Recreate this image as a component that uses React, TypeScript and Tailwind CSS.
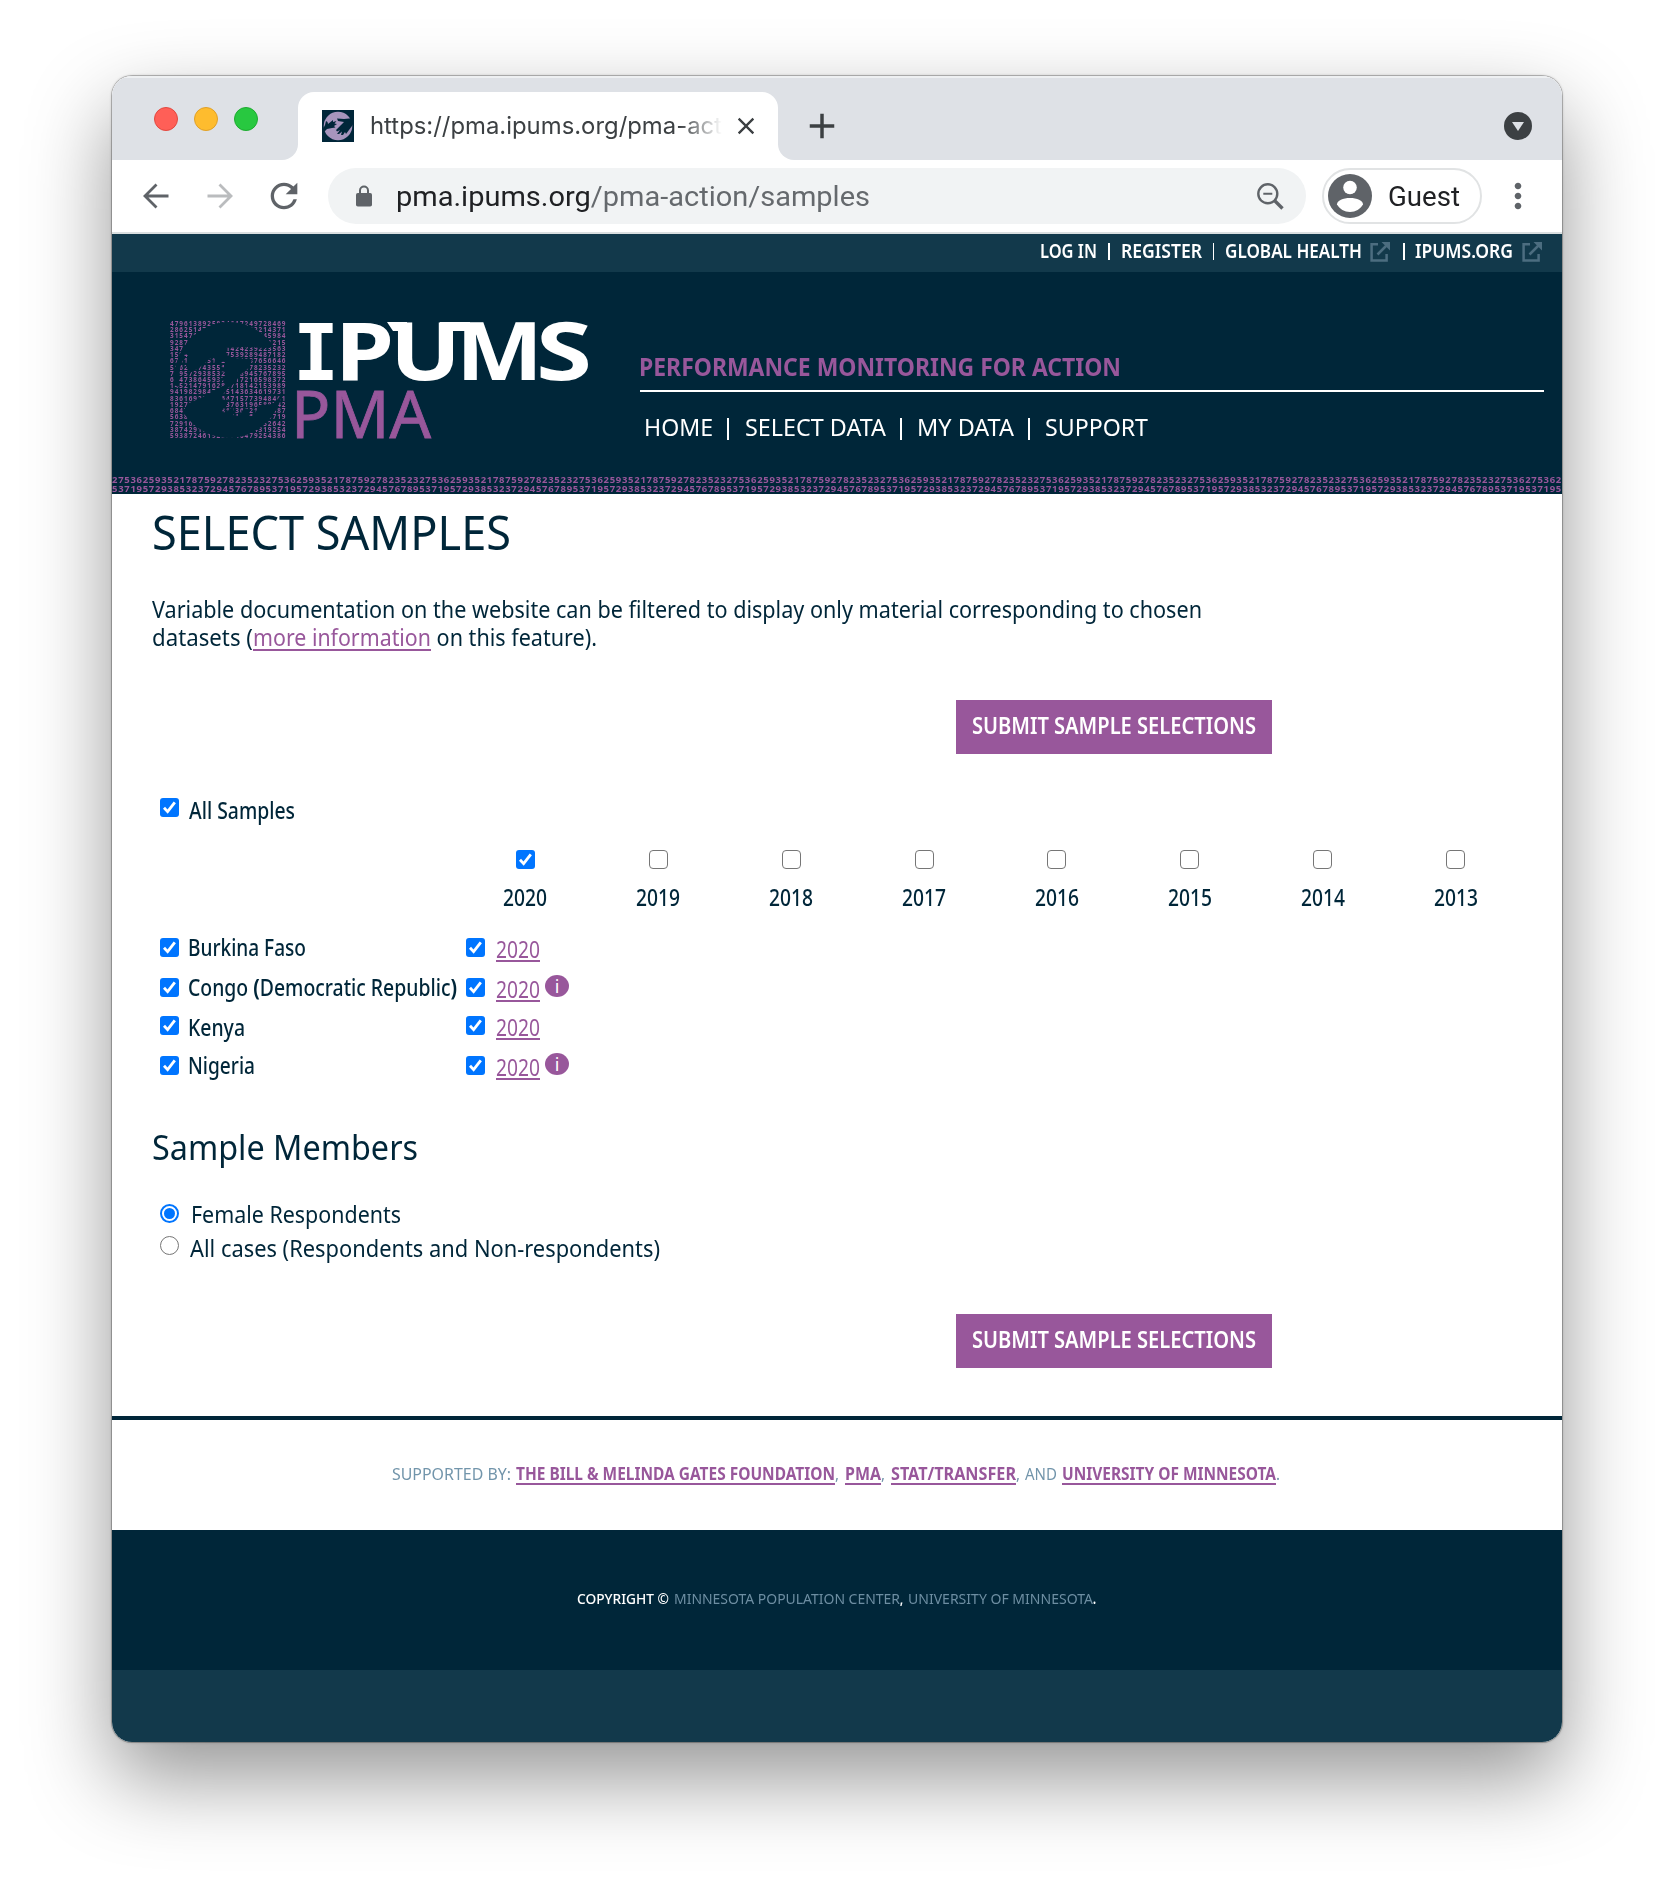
import { useLayoutEffect, useRef, useState } from "react";
import type { ReactNode } from "react";
import { MdAdd, MdClose, MdMoreVert, MdRefresh } from "react-icons/md";

/** One line of text condensed or expanded horizontally to fill a given width. */
function Fit({ w, className = "", children }: { w: number; className?: string; children: ReactNode }) {
  const ref = useRef<HTMLSpanElement>(null);
  const scaleRef = useRef(1);
  const [scale, setScale] = useState(1);
  scaleRef.current = scale;
  useLayoutEffect(() => {
    if (ref.current && ref.current.offsetWidth) {
      setScale((w / ref.current.getBoundingClientRect().width) * scaleRef.current);
    }
  }, [w]);
  return (
    <span className={`block shrink-0 whitespace-pre ${className}`} style={{ width: w }}>
      <span ref={ref} className="inline-block origin-left" style={{ transform: `scaleX(${scale})` }}>
        {children}
      </span>
    </span>
  );
}

function Check({ on = true, className = "" }: { on?: boolean; className?: string }) {
  return on ? (
    <span className={`block size-[19px] shrink-0 rounded-[3px] bg-[#0075ff] ${className}`}>
      <svg viewBox="0 0 19 19" className="size-full" fill="none" stroke="#fff" strokeWidth="2.8">
        <path d="M4 9.8 7.6 13.6 14.8 4.4" />
      </svg>
    </span>
  ) : (
    <span className={`block size-[19px] shrink-0 rounded-[4px] border-[1.5px] border-[#767676] bg-white ${className}`} />
  );
}

function External({ className = "" }: { className?: string }) {
  return (
    <svg viewBox="0 0 20 20" className={`size-5 shrink-0 ${className}`} fill="none" stroke="#4c6d80" strokeWidth="2.5">
      <path d="M8 2.2H1.6v16.2h15V12" />
      <path d="M7.5 12.5 17 3" />
      <path d="M11.5 0H20v8.5z" fill="#4c6d80" stroke="none" />
    </svg>
  );
}

const emblemRows = [
  "4796138925834617249728469",
  "2862514793825164783214371",
  "3154719283746519283745984",
  "9287461538294617385291215",
  "3471928374651424239223563",
  "1584736291847539289487182",
  "6741928351527164937656646",
  "5162837435517283478235232",
  "7195729385327238945767895",
  "6147386459372617216598372",
  "1452147916283718142153989",
  "9419829847365143634619731",
  "8361692847364715773948461",
  "1927364518293763196588742",
  "6847291635281736721938487",
  "5638271946352817465928719",
  "7291638274651928374652642",
  "3874291635284719364319254",
  "5938724619283746479254386",
];

function Logo() {
  return (
    <svg viewBox="0 0 420 118" className="h-[118px] w-[420px]">
      <defs>
        <mask id="emblem" maskUnits="userSpaceOnUse" x="0" y="0" width="117" height="118">
          <rect width="117" height="118" fill="#fff" />
          <ellipse cx="59" cy="59" rx="55" ry="58" fill="#000" />
          <path
            fill="#fff"
            d="M117 25 95 27 75 26 55 27 57 34 62 37 82 38 80 46 70 54 65 62 58 67 52 75 53 79 60 78 52 90 55 92 64 85 63 94 69 95 74 87 79 88 78 95 83 95 90 84 102 83 108 78 117 62z"
          />
          <path
            fill="#fff"
            d="M0 62 8 66 10 47 15 33 18 34 16 45 20 52 29 47 42 36 45 38 44 44 55 40 56 44 49 50 56 51 55 55 48 59 56 60 55 64 46 68 33 76 19 82 12 91 0 92z"
          />
        </mask>
      </defs>
      <g mask="url(#emblem)">
        <text fill="#98579b" fontFamily="Noto Sans" fontWeight="700" fontSize="6.4" letterSpacing="0.5">
          {emblemRows.map((row, i) => (
            <tspan key={row} x="0" y={5 + i * 6.22} textLength="116" lengthAdjust="spacing">
              {row}
            </tspan>
          ))}
        </text>
      </g>
      <g fill="#fff">
        <text y="59" fontFamily="Noto Sans" fontWeight="700" fontSize="81">
          <tspan x="123" fontFamily="DejaVu Sans Mono" fontSize="79" textLength="46" lengthAdjust="spacingAndGlyphs">
            I
          </tspan>
          <tspan x="165" textLength="59" lengthAdjust="spacingAndGlyphs">
            P
          </tspan>
          <tspan x="220" textLength="71" lengthAdjust="spacingAndGlyphs">
            U
          </tspan>
          <tspan x="286" textLength="87" lengthAdjust="spacingAndGlyphs">
            M
          </tspan>
          <tspan x="366" textLength="56" lengthAdjust="spacingAndGlyphs">
            S
          </tspan>
        </text>
        <path d="M217 1h20v9h-14zM270 1h30v9h-30z" />
      </g>
      <text
        x="121"
        y="117"
        fill="#98579b"
        fontFamily="Noto Sans"
        fontSize="66"
        stroke="#98579b"
        strokeWidth="0.8"
        textLength="140"
        lengthAdjust="spacingAndGlyphs"
      >
        PMA
      </text>
    </svg>
  );
}

function Favicon() {
  return (
    <svg viewBox="0 0 32 32" className="size-8 shrink-0">
      <rect width="32" height="32" fill="#002639" />
      <circle cx="16" cy="16" r="14.3" fill="#a795bd" />
      <path
        fill="#002639"
        d="M32 8 22 9 15 8.500 16 11 22 12 19 15 14 20 15 21.500 18 20 15 24 17 24 20 21.500 19 25 21 25 23 22 24 24 27 20 30 16 32 12z"
      />
      <path
        fill="#002639"
        d="M1 19 3 15 4 11 5.500 12 6 14 11 10 11 12 14.500 11 12.500 13.500 15 14 12 16 13.500 17.500 10 18 5 19 2 22z"
      />
    </svg>
  );
}

function TabBar() {
  return (
    <div className="flex h-[84px] items-end bg-[#dee1e6] shadow-[inset_0_2px_0_#eef0f2]">
      <div className="mb-[29px] ml-[42px] flex gap-4">
        <span className="size-6 rounded-full border border-[#e2483f] bg-[#ff5f57]" />
        <span className="size-6 rounded-full border border-[#e0a028] bg-[#febc2e]" />
        <span className="size-6 rounded-full border border-[#1eab30] bg-[#28c840]" />
      </div>
      <div className="ml-6 size-4 bg-white">
        <div className="size-full rounded-br-[16px] bg-[#dee1e6]" />
      </div>
      <div className="flex h-[68px] w-[480px] items-center rounded-t-[16px] bg-white pl-6">
        <Favicon />
        <Fit w={352} className="ml-4 mask-r-from-88% font-[Inter] text-[24px] leading-[30px] text-[#3c4043]">
          https://pma.ipums.org/pma-act
        </Fit>
        <MdClose className="ml-2.5 size-7 text-[#3c4043]" />
      </div>
      <div className="size-4 bg-white">
        <div className="size-full rounded-bl-[16px] bg-[#dee1e6]" />
      </div>
      <MdAdd className="mb-[13px] ml-[7px] size-[42px] text-[#3c4043]" />
      <svg viewBox="0 0 28 28" className="mr-[30px] mb-5 ml-auto size-7">
        <circle cx="14" cy="14" r="14" fill="#3c4043" />
        <path d="M8 10h12l-6 9z" fill="#dee1e6" />
      </svg>
    </div>
  );
}

function Toolbar() {
  return (
    <div className="flex h-[74px] items-center border-b-2 border-[#dadfe0] bg-white pl-[31px] font-[Roboto] text-[#202124]">
      <svg viewBox="0 0 26 26" className="size-[26px] shrink-0" fill="none" stroke="#5f6368" strokeWidth="2.8">
        <path d="M25.500 13H2.500M13.500 1.500 2 13l11.500 11.500" />
      </svg>
      <svg viewBox="0 0 26 26" className="ml-[38px] size-[26px] shrink-0" fill="none" stroke="#babcbe" strokeWidth="2.8">
        <path d="M.5 13h23M12.500 1.500 24 13 12.500 24.500" />
      </svg>
      <MdRefresh className="ml-[31px] size-10 shrink-0 text-[#5f6368]" />
      <div className="ml-6 flex h-14 w-[978px] items-center rounded-full bg-[#f1f3f4]">
        <svg viewBox="0 0 16 22" className="mb-px ml-7 h-[22px] w-4" fill="#5f6368">
          <rect y="8" width="16" height="13.500" rx="1.800" />
          <path d="M4 9V5.500a4 4 0 0 1 8 0V9" fill="none" stroke="#5f6368" strokeWidth="2" />
        </svg>
        <Fit w={474} className="ml-6 pt-px text-[28px] leading-[34px]">
          pma.ipums.org<span className="text-[#65696d]">/pma-action/samples</span>
        </Fit>
        <svg viewBox="0 0 27 27" className="mr-[22px] ml-auto size-[27px]" fill="none" stroke="#5f6368">
          <circle cx="10.800" cy="10.800" r="9.500" strokeWidth="2.400" />
          <path d="M6.300 10.800h9" strokeWidth="2" />
          <path d="M17.500 17.500 25.500 25.500" strokeWidth="3.400" />
        </svg>
      </div>
      <div className="ml-4 flex h-14 w-[160px] items-center rounded-full border-2 border-[#e1e3e4] pl-1">
        <svg viewBox="0 0 44 44" className="size-11">
          <circle cx="22" cy="22" r="22" fill="#5f6368" />
          <circle cx="22" cy="13.500" r="6.800" fill="#fff" />
          <path d="M9 30.500c0-4 6-6.500 13-6.500s13 2.500 13 6.500c-2.500 4.500-7.500 7.500-13 7.500s-10.500-3-13-7.500z" fill="#fff" />
        </svg>
        <Fit w={72} className="ml-4 pt-px text-[27px] leading-[34px]">
          Guest
        </Fit>
      </div>
      <MdMoreVert className="ml-4 size-10 shrink-0 text-[#5f6368]" />
    </div>
  );
}

function Header() {
  const util = "text-[19px] leading-[26px] font-semibold";
  const utilBar = "mt-[5px] h-[17px] w-[1.5px] bg-white";
  const nav = "text-[23.4px] leading-[30px]";
  const navBar = "mt-1.5 ml-[14px] h-[22px] w-0.5 bg-white";
  return (
    <header className="text-white">
      <div className="flex h-[38px] bg-[#12394b] pt-1 pl-[928px]">
        <Fit w={57} className={util}>LOG IN</Fit>
        <span className={`ml-[11px] ${utilBar}`} />
        <Fit w={81} className={`ml-[11px] ${util}`}>REGISTER</Fit>
        <span className={`ml-[11px] ${utilBar}`} />
        <Fit w={137} className={`ml-[11px] ${util}`}>GLOBAL HEALTH</Fit>
        <External className="mt-1 ml-2" />
        <span className={`ml-[13px] ${utilBar}`} />
        <Fit w={98} className={`ml-[10px] ${util}`}>IPUMS.ORG</Fit>
        <External className="mt-1 ml-[9px]" />
      </div>
      <div className="flex h-[203px] bg-[#002639]">
        <div className="mt-[49px] ml-[58px] w-[470px]">
          <Logo />
        </div>
        <div className="w-[904px] pt-[76px]">
          <Fit w={482} className="-ml-px text-[25px] leading-[36px] font-bold text-[#98579b]">
            PERFORMANCE MONITORING FOR ACTION
          </Fit>
          <div className="mt-[6px] h-0.5 bg-white" />
          <nav className="mt-5 flex pl-[4px]">
            <Fit w={69} className={nav}>HOME</Fit>
            <span className={navBar} />
            <Fit w={141} className={`ml-4 ${nav}`}>SELECT DATA</Fit>
            <span className={navBar} />
            <Fit w={97} className={`ml-[15px] ${nav}`}>MY DATA</Fit>
            <span className={navBar} />
            <Fit w={103} className={`ml-[15px] ${nav}`}>SUPPORT</Fit>
          </nav>
        </div>
      </div>
      <DigitStrip />
    </header>
  );
}

function DigitStrip() {
  const top = "2753625935217875927823523";
  const bottom = "5371957293853237294576789";
  return (
    <div className="h-[19px] bg-[#002639] pt-px text-[9.4px] leading-[8.5px] font-bold tracking-[0.7px] text-[#98579b]">
      <Fit w={1450}>{top.repeat(9) + "27536" + top.slice(0, 6)}</Fit>
      <Fit w={1450}>{bottom.repeat(9) + "53719" + bottom.slice(0, 6)}</Fit>
    </div>
  );
}

function SubmitButton({ className }: { className: string }) {
  return (
    <button className={`ml-[844px] flex h-[54px] w-[316px] items-center justify-center bg-[#98579b] pb-[5px] text-white ${className}`}>
      <Fit w={284} className="text-left font-semibold">
        SUBMIT SAMPLE SELECTIONS
      </Fit>
    </button>
  );
}

const link = "border-b-2 border-[#98579b] text-[#98579b]";

const years = ["2020", "2019", "2018", "2017", "2016", "2015", "2014", "2013"];

const samples = [
  { id: "bf", name: "Burkina Faso", w: 118, row: "h-[40px]", label: "mt-px", info: false },
  { id: "cd", name: "Congo (Democratic Republic)", w: 269, row: "h-[38px]", label: "mt-px", info: true },
  { id: "ke", name: "Kenya", w: 57, row: "h-[40px]", label: "mt-[3px]", info: false },
  { id: "ng", name: "Nigeria", w: 67, row: "h-[40px]", label: "mt-[1px]", info: true },
];

function Samples() {
  return (
    <section>
      <div className="mt-[42px] flex pl-12">
        <Check className="mt-0.5" />
        <Fit w={106} className="ml-[10px] font-medium">
          All Samples
        </Fit>
      </div>
      <div className="mt-[26px] ml-[347px] grid w-[1063px] grid-cols-8 justify-items-center gap-y-3.5">
        {years.map((y, i) => (
          <Check key={y} on={i === 0} />
        ))}
        {years.map((y) => (
          <Fit key={y} w={44} className="font-medium">
            {y}
          </Fit>
        ))}
      </div>
      <div className="mt-[21px]">
        {samples.map((s) => (
          <div key={s.id} className={`flex pl-12 ${s.row}`}>
            <Check className="mt-1.5" />
            <div className="w-[287px] pl-[9px]">
              <Fit w={s.w} className={`font-medium ${s.label}`}>
                {s.name.split(/([()])/).map((part, i) =>
                  part === "(" || part === ")" ? <b key={i}>{part}</b> : part,
                )}
              </Fit>
            </div>
            <Check className="mt-1.5" />
            <Fit w={44} className={`mt-[3px] ml-[11px] h-[27px] leading-[28px] ${link}`}>
              2020
            </Fit>
            {s.info && (
              <span className="mt-[3px] ml-[5px] flex h-[22px] w-6 items-center justify-center rounded-[50%] bg-[#98579b] pb-px text-[18px] leading-none text-white">
                i
              </span>
            )}
          </div>
        ))}
      </div>
    </section>
  );
}

function Members() {
  return (
    <section>
      <Fit w={266} className="mt-[35px] ml-[40px] text-[35px] leading-[44px]">
        Sample Members
      </Fit>
      <div className="mt-[31px] flex h-[34px] pl-12">
        <span className="mt-1 flex size-[19px] items-center justify-center rounded-full border-2 border-[#0075ff]">
          <span className="size-[11px] rounded-full bg-[#0075ff]" />
        </span>
        <Fit w={210} className="ml-[12px]">
          Female Respondents
        </Fit>
      </div>
      <div className="flex h-[28px] pl-12">
        <span className="mt-0.5 size-[19px] rounded-full border-[1.5px] border-[#767676]" />
        <Fit w={470} className="ml-[11px]">
          All cases (Respondents and Non-respondents)
        </Fit>
      </div>
    </section>
  );
}

function Footer() {
  const bold = `h-[21px] font-bold ${link}`;
  return (
    <footer className="mt-12">
      <div className="flex h-[114px] border-t-4 border-[#002639] pt-[44px] pl-[280px] text-[17px] leading-5 text-[#7295ab]">
        <Fit w={119}>SUPPORTED BY:</Fit>
        <Fit w={319} className={`ml-[5px] ${bold}`}>{"THE BILL & MELINDA GATES FOUNDATION"}</Fit>
        <Fit w={4}>,</Fit>
        <Fit w={36} className={`ml-1.5 ${bold}`}>PMA</Fit>
        <Fit w={4}>,</Fit>
        <Fit w={125} className={`ml-1.5 ${bold}`}>STAT/TRANSFER</Fit>
        <Fit w={4}>,</Fit>
        <Fit w={32} className="ml-[5px]">AND</Fit>
        <Fit w={214} className={`ml-[5px] ${bold}`}>UNIVERSITY OF MINNESOTA</Fit>
        <Fit w={4}>.</Fit>
      </div>
      <div className="flex h-[140px] bg-[#002639] pt-[60px] pl-[465px] text-[14px] leading-[18px] text-[#6d8ea2]">
        <Fit w={92} className="font-medium text-white">COPYRIGHT ©</Fit>
        <Fit w={226} className="ml-[5px]">MINNESOTA POPULATION CENTER</Fit>
        <Fit w={3} className="font-bold text-white">,</Fit>
        <Fit w={185} className="ml-[5px]">UNIVERSITY OF MINNESOTA</Fit>
        <Fit w={3} className="font-bold text-white">.</Fit>
      </div>
      <div className="h-[72px] bg-[#12394b]" />
    </footer>
  );
}

export default function App() {
  return (
    <div className="h-[1890px] w-[1674px] overflow-hidden bg-white pt-[76px] pl-28">
      <div className="w-[1450px] rounded-[20px] shadow-[0_0_0_1px_rgba(0,0,0,0.2),0_0_3px_rgba(0,0,0,0.3),0_36px_84px_rgba(0,0,0,0.42)]">
        <div className="overflow-hidden rounded-[20px] bg-white font-['Noto_Sans'] text-[23px] leading-[28px] text-[#002639]">
          <TabBar />
          <Toolbar />
          <Header />
          <main>
            <h1>
              <Fit w={359} className="mt-[8px] ml-[40px] text-[47px] leading-[60px]">
                SELECT SAMPLES
              </Fit>
            </h1>
            <div className="mt-[33px] pl-10">
              <Fit w={1050}>
                Variable documentation on the website can be filtered to display only material corresponding to chosen
              </Fit>
              <div className="flex">
                <Fit w={101}>datasets (</Fit>
                <Fit w={178} className={`h-[28px] ${link}`}>
                  more information
                </Fit>
                <Fit w={166}> on this feature).</Fit>
              </div>
            </div>
            <SubmitButton className="mt-[49px]" />
            <Samples />
            <Members />
            <SubmitButton className="mt-[52px]" />
          </main>
          <Footer />
        </div>
      </div>
    </div>
  );
}
